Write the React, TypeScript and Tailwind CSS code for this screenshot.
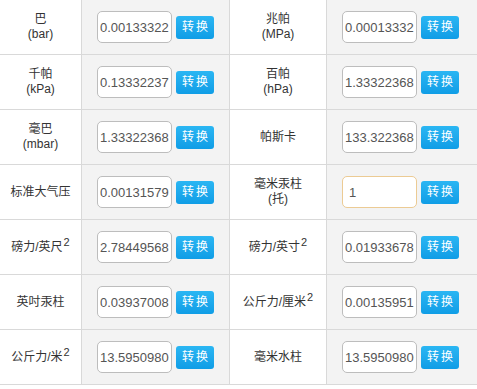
import React from 'react';

type Unit = { label: React.ReactNode; value: string; focused?: boolean };

const sup = (base: string) => (
  <span>
    {base}
    <sup className="text-[11px] -top-[5px] ml-[1px]">2</sup>
  </span>
);

const rows: [Unit, Unit][] = [
  [
    { label: <><div>巴</div><div>(bar)</div></>, value: '0.00133322' },
    { label: <><div>兆帕</div><div>(MPa)</div></>, value: '0.00013332' },
  ],
  [
    { label: <><div>千帕</div><div>(kPa)</div></>, value: '0.13332237' },
    { label: <><div>百帕</div><div>(hPa)</div></>, value: '1.33322368' },
  ],
  [
    { label: <><div>毫巴</div><div>(mbar)</div></>, value: '1.33322368' },
    { label: '帕斯卡', value: '133.32236842' },
  ],
  [
    { label: '标准大气压', value: '0.00131579' },
    { label: <><div>毫米汞柱</div><div>(托)</div></>, value: '1', focused: true },
  ],
  [
    { label: sup('磅力/英尺'), value: '2.78449568' },
    { label: sup('磅力/英寸'), value: '0.01933678' },
  ],
  [
    { label: '英吋汞柱', value: '0.03937008' },
    { label: sup('公斤力/厘米'), value: '0.00135951' },
  ],
  [
    { label: sup('公斤力/米'), value: '13.59509806' },
    { label: '毫米水柱', value: '13.59509806' },
  ],
];

function LabelCell({ children }: { children: React.ReactNode }) {
  return (
    <div className="h-[55px] flex flex-col items-center justify-center text-center text-[12px] leading-[15px] text-[#333] bg-white border-r border-b border-[#d9d9d9]">
      {children}
    </div>
  );
}

function InputCell({ value, focused, last }: { value: string; focused?: boolean; last?: boolean }) {
  return (
    <div
      className={`h-[55px] flex items-center gap-[4px] pl-[15px] bg-[#f3f3f3] border-b border-[#d9d9d9] ${
        last ? '' : 'border-r'
      }`}
    >
      <input
        readOnly
        value={value}
        className={`w-[75px] h-[32px] shrink-0 rounded-[5px] bg-white px-[2px] text-[13px] text-[#555] outline-none border ${
          focused ? 'border-[#eccb94] pl-[6px]' : 'border-[#bdbdbd]'
        }`}
      />
      <button className="w-[38px] h-[23px] shrink-0 rounded-[3px] bg-gradient-to-b from-[#2ab6f3] to-[#0f9de6] text-white text-[12px] tracking-[2px] pl-[2px] leading-[23px]">
        转换
      </button>
    </div>
  );
}

export default function App() {
  return (
    <div
      className="w-[477px] h-[389px] bg-white overflow-hidden"
      style={{ fontFamily: '"Liberation Sans", "Noto Sans CJK SC", sans-serif' }}
    >
      <div className="grid grid-cols-[82px_148px_97px_1fr]">
        {rows.map(([a, b], i) => (
          <React.Fragment key={i}>
            <LabelCell>{a.label}</LabelCell>
            <InputCell value={a.value} focused={a.focused} />
            <LabelCell>{b.label}</LabelCell>
            <InputCell value={b.value} focused={b.focused} last />
          </React.Fragment>
        ))}
      </div>
    </div>
  );
}
